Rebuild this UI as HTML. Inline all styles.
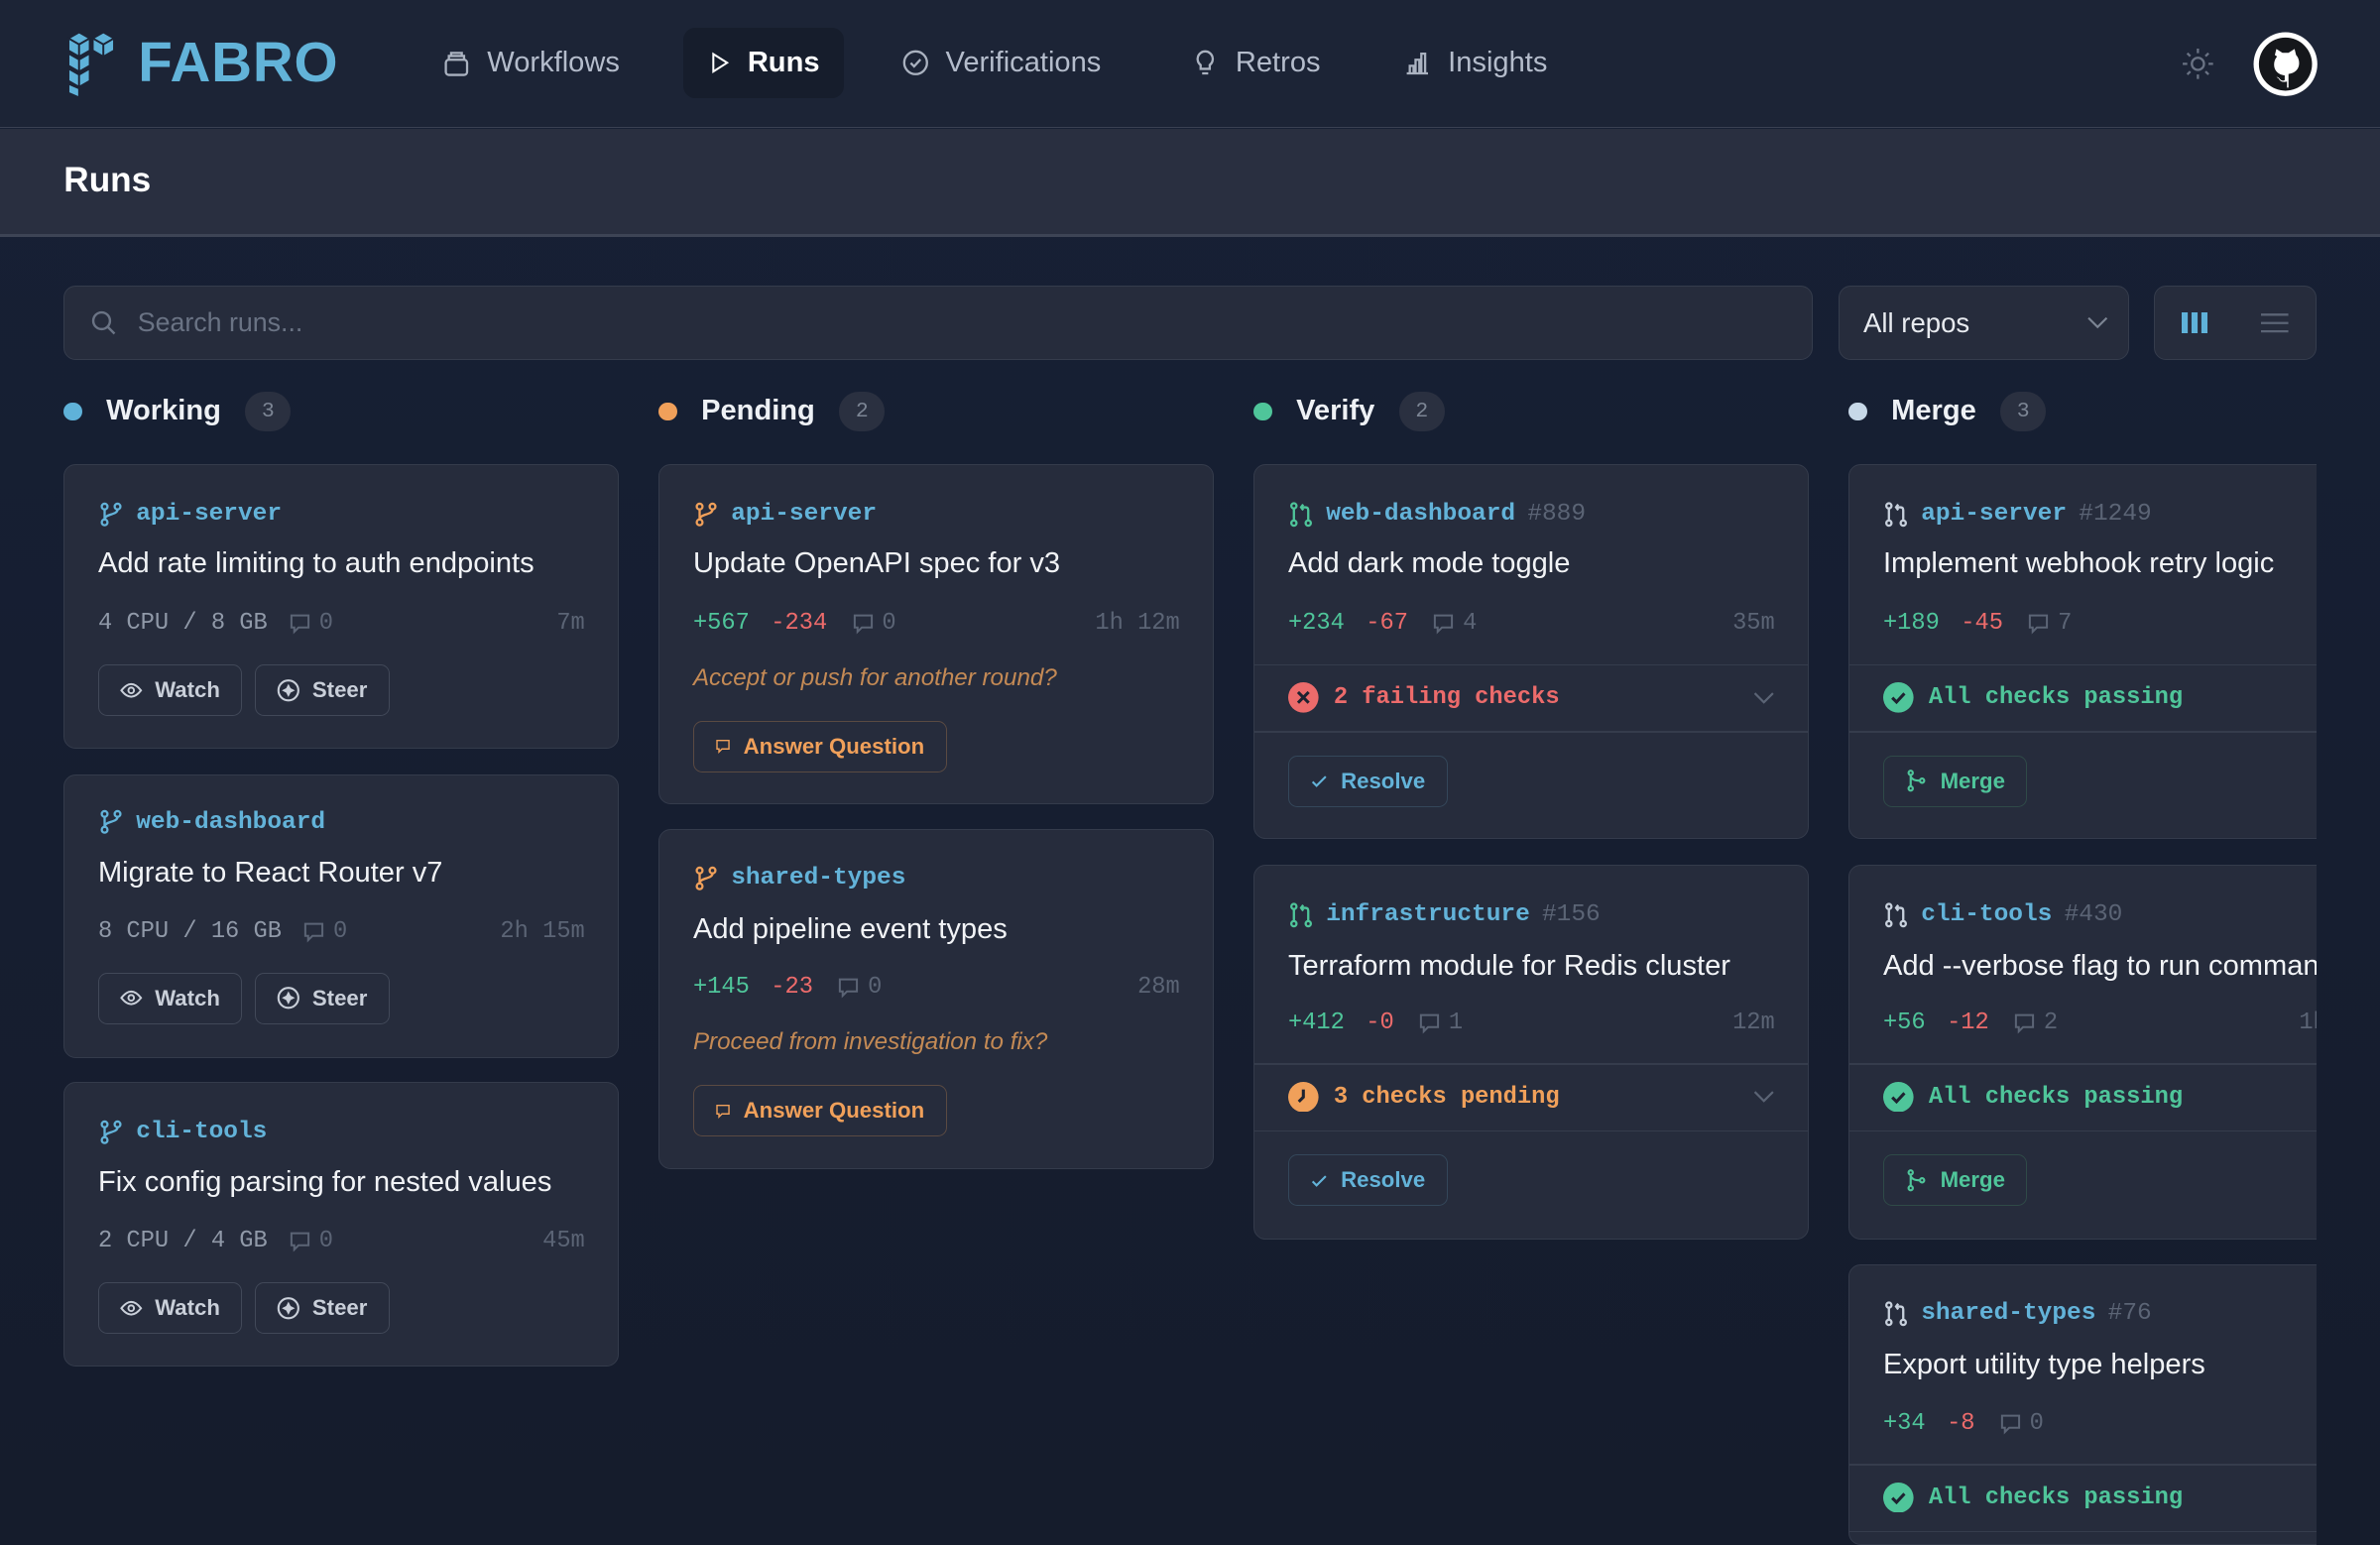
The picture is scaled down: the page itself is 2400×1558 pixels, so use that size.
<!DOCTYPE html>
<html><head><meta charset="utf-8"><style>
*{box-sizing:border-box;margin:0;padding:0}
html,body{width:2400px;height:1558px;overflow:hidden;background:#161e30}
#r{zoom:1.5306;width:1568px;height:1018px;overflow:hidden;position:relative;font-family:"Liberation Sans",sans-serif;color:#e6e9ef;background:linear-gradient(180deg,#172035,#151c2c)}
.hdr{position:absolute;left:0;top:0;width:1568px;height:84px;background:#1c2436;border-bottom:1px solid #3a4152}
.band{position:absolute;left:0;top:85px;width:1568px;height:71px;background:#292f40;border-bottom:2px solid #3d4455}
.nav{position:absolute;top:18px;height:47px;display:flex;align-items:center;gap:10px;font-size:19px;color:#b4bccb;padding:0 16px}
.nav.act{background:#161d2c;border-radius:8px;color:#fff;font-weight:bold}
.abs{position:absolute}
.box{position:absolute;background:#262c3c;border:1px solid #353c4c;border-radius:8px}
.colh{position:absolute;top:259px;height:24px;display:flex;align-items:center;font-size:19px;font-weight:bold;color:#eef1f5}
.dot{width:12px;height:12px;border-radius:50%;margin-right:16px}
.cnt{margin-left:16px;width:30px;height:26px;border-radius:13px;background:#2a3040;color:#7c8594;font-size:14px;font-weight:normal;display:flex;align-items:center;justify-content:center;font-family:"Liberation Mono",monospace}
.clip{position:absolute;left:0;top:0;width:1526px;height:1018px;overflow:hidden}
.card{position:absolute;width:366px;background:#262c3c;border:1px solid #343b4b;border-radius:8px;overflow:hidden}
.repo{position:absolute;left:22px;height:20px;display:flex;align-items:center;gap:8px;font-family:"Liberation Mono",monospace;font-size:16px;font-weight:bold;color:#63b3d9;white-space:nowrap}
.repo .pr{color:#5b6475;font-weight:normal}
.title{position:absolute;left:22px;font-size:19px;color:#f1f3f6;white-space:nowrap;line-height:22px}
.meta{position:absolute;left:22px;right:22px;height:20px;display:flex;align-items:center;font-family:"Liberation Mono",monospace;font-size:15.5px;color:#9099a8;white-space:nowrap}
.meta .t{margin-left:auto;color:#5b6475}
.add{color:#4fc59a;margin-right:14px}.del{color:#ec6b6b;margin-right:16px}
.cm{display:flex;align-items:center;gap:5px;color:#5b6475}
.btn{position:absolute;height:34px;border:1px solid #414858;border-radius:6px;display:flex;align-items:center;gap:8px;padding:0 14px;font-size:14.5px;font-weight:bold;color:#c9cfd9;white-space:nowrap}
.q{position:absolute;left:22px;font-style:italic;font-size:15.8px;color:#c48a55;white-space:nowrap}
.hr{position:absolute;left:0;right:0;height:1px;background:#353c4c}
.chk{position:absolute;left:22px;right:22px;height:22px;display:flex;align-items:center;gap:10px;font-family:"Liberation Mono",monospace;font-size:15.5px;font-weight:bold;white-space:nowrap}
.chk .chev{margin-left:auto}
</style></head><body><div id="r">
<div class="hdr">
 <svg class="abs" style="left:43px;top:20px" width="36" height="44" viewBox="0 0 36 44"><g fill="#5fb2d9" stroke="#1c2436" stroke-width="1.2"><path d="M2 5l7-4 7 4-7 4z"/><path d="M2 5v8l7 4V9z"/><path d="M9 9v8l7-4V5z"/><path d="M18 5l7-4 7 4-7 4z"/><path d="M18 5v8l7 4V9z"/><path d="M25 9v8l7-4V5z"/><path d="M2 15v8l7 4v-8z"/><path d="M9 19v8l7-4v-8z"/><path d="M2 25v8l7 4v-8z"/><path d="M9 29v8l7-4v-8zM2 35v6l7 3v-6z"/></g></svg>
 <div class="abs" style="left:91px;top:20px;font-size:37px;font-weight:bold;color:#62b3d9;letter-spacing:0.5px">FABRO</div>
 <div class="nav" style="left:275px"><svg width="20" height="20" viewBox="0 0 20 20" fill="none" stroke="#aab2c0" stroke-width="1.5"><rect x="3" y="8" width="14" height="10" rx="2"/><path d="M5 8V5.5h10V8M6.5 5.5V3.5h7v2"/></svg>Workflows</div>
 <div class="nav act" style="left:450px;width:106px"><svg width="20" height="20" viewBox="0 0 20 20" fill="none" stroke="#fff" stroke-width="1.6"><path d="M5 3l11 7-11 7z"/></svg>Runs</div>
 <div class="nav" style="left:577px"><svg width="20" height="20" viewBox="0 0 20 20" fill="none" stroke="#aab2c0" stroke-width="1.5"><circle cx="10" cy="10" r="7.5"/><path d="M6.8 10.2l2.2 2.2 4.2-4.6"/></svg>Verifications</div>
 <div class="nav" style="left:768px"><svg width="20" height="20" viewBox="0 0 20 20" fill="none" stroke="#aab2c0" stroke-width="1.5"><path d="M10 2.5a5 5 0 0 0-3 9V14h6v-2.5a5 5 0 0 0-3-9zM8 17h4"/></svg>Retros</div>
 <div class="nav" style="left:908px"><svg width="20" height="20" viewBox="0 0 20 20" fill="none" stroke="#aab2c0" stroke-width="1.5"><path d="M3 17h14M5 17v-5h2.5v5M8.8 17V8h2.5v9M12.6 17V4h2.5v13"/></svg>Insights</div>
 <svg class="abs" style="left:1436px;top:30px" width="24" height="24" viewBox="0 0 24 24" fill="none" stroke="#6a7384" stroke-width="1.5"><circle cx="12" cy="12" r="4"/><path d="M12 2v3M12 19v3M2 12h3M19 12h3M5 5l2 2M17 17l2 2M5 19l2-2M17 7l2-2"/></svg>
 <svg class="abs" style="left:1484px;top:20px" width="44" height="44" viewBox="0 0 44 44"><circle cx="22" cy="22" r="21" fill="#fff"/><circle cx="22" cy="22" r="17.5" fill="#15171b"/><path fill="#fff" d="M15 16l1-4 4 2.5h4l4-2.5 1 4q2 2 2 5.5c0 4-3 6.5-7 7v9h-1v-4q-4 1-5.5-2l-1.5-1q1.5 0 2.5 1.5 1.5 1.5 3 .5v-3c-4-.5-7-3-7-7q0-3.5 2-5.5z"/></svg>
</div>
<div class="band"><div class="abs" style="left:42px;top:21px;font-size:23px;font-weight:bold;color:#fff">Runs</div></div>

<div class="box" style="left:42px;top:188px;width:1152px;height:49px">
 <svg class="abs" style="left:17px;top:15px" width="18" height="18" viewBox="0 0 18 18" fill="none" stroke="#6a7384" stroke-width="1.6"><circle cx="7.5" cy="7.5" r="5.5"/><path d="M11.5 11.5l4.5 4.5"/></svg>
 <div class="abs" style="left:48px;top:14px;font-size:17.5px;color:#6a7384">Search runs...</div>
</div>
<div class="box" style="left:1211px;top:188px;width:192px;height:49px">
 <div class="abs" style="left:16px;top:14px;font-size:18px;color:#e8ebf0">All repos</div>
 <svg class="abs" style="left:162px;top:18px" width="16" height="12" viewBox="0 0 16 12" fill="none" stroke="#7c8594" stroke-width="1.4"><path d="M2 3l6 6 6-6"/></svg>
</div>
<div class="box" style="left:1419px;top:188px;width:107px;height:49px">
 <svg class="abs" style="left:18px;top:17px" width="18" height="14"><rect x="0" y="0" width="4" height="14" fill="#5fb2d9"/><rect x="6.5" y="0" width="4" height="14" fill="#5fb2d9"/><rect x="13" y="0" width="4" height="14" fill="#5fb2d9"/></svg>
 <svg class="abs" style="left:70px;top:17px" width="18" height="14" stroke="#5b6475" stroke-width="1.5"><path d="M0 1.5h18M0 7h18M0 12.5h18"/></svg>
</div>

<div class="colh" style="left:42px"><span class="dot" style="background:#5fb2d9"></span>Working<span class="cnt">3</span></div>
<div class="colh" style="left:434px"><span class="dot" style="background:#f0a05a"></span>Pending<span class="cnt">2</span></div>
<div class="colh" style="left:826px"><span class="dot" style="background:#4fc59a"></span>Verify<span class="cnt">2</span></div>
<div class="colh" style="left:1218px"><span class="dot" style="background:#c7d8e8"></span>Merge<span class="cnt">3</span></div>

<svg width="0" height="0" style="position:absolute"><defs>
<symbol id="br" viewBox="0 0 18 18"><g fill="none" stroke="currentColor" stroke-width="1.6"><circle cx="4.5" cy="3.5" r="2"/><circle cx="4.5" cy="14.5" r="2"/><circle cx="13.5" cy="3.5" r="2"/><path d="M4.5 5.5v7M13.5 5.5c0 4-9 3-9 7"/></g></symbol>
<symbol id="pr" viewBox="0 0 18 18"><g fill="none" stroke="currentColor" stroke-width="1.6"><circle cx="4" cy="3" r="1.8"/><circle cx="4" cy="15" r="1.8"/><circle cx="14" cy="15" r="1.8"/><path d="M4 5v8M14 13V6q0-2-2-2H9M10.5 2L9 4l1.5 2"/></g></symbol>
<symbol id="cm" viewBox="0 0 16 16"><path fill="none" stroke="currentColor" stroke-width="1.4" d="M2 2.5h12v8.5H7l-3 3v-3H2z"/></symbol>
<symbol id="eye" viewBox="0 0 16 16"><g fill="none" stroke="currentColor" stroke-width="1.4"><path d="M1 8q7-9 14 0-7 9-14 0z"/><circle cx="8" cy="8" r="2"/></g></symbol>
<symbol id="steer" viewBox="0 0 16 16"><circle cx="8" cy="8" r="6.8" fill="none" stroke="currentColor" stroke-width="1.4"/><path fill="currentColor" d="M8 3.5l1.5 3 3 1.5-3 1.5L8 12.5 6.5 9.5 3.5 8l3-1.5z"/></symbol>
<symbol id="chev" viewBox="0 0 14 10"><path d="M1 2l6 6 6-6" fill="none" stroke="#5b6475" stroke-width="1.4"/></symbol>
</defs></svg>

<div class="clip">
<!-- Working -->
<div class="card" style="left:42px;top:306px;height:187px">
 <div class="repo" style="top:22px;color:#63b3d9"><svg width="17" height="18" style="color:#63b3d9"><use href="#br"/></svg>api-server</div>
 <div class="title" style="top:54px">Add rate limiting to auth endpoints</div>
 <div class="meta" style="top:94px">4 CPU / 8 GB<span class="cm" style="margin-left:14px"><svg width="15" height="15"><use href="#cm"/></svg>0</span><span class="t">7m</span></div>
 <div class="btn" style="left:22px;top:131px;width:95px"><svg width="16" height="16"><use href="#eye"/></svg>Watch</div>
 <div class="btn" style="left:125px;top:131px;width:89px"><svg width="16" height="16"><use href="#steer"/></svg>Steer</div>
</div>
<div class="card" style="left:42px;top:510px;height:187px">
 <div class="repo" style="top:21px"><svg width="17" height="18"><use href="#br"/></svg>web-dashboard</div>
 <div class="title" style="top:54px">Migrate to React Router v7</div>
 <div class="meta" style="top:93px">8 CPU / 16 GB<span class="cm" style="margin-left:14px"><svg width="15" height="15"><use href="#cm"/></svg>0</span><span class="t">2h 15m</span></div>
 <div class="btn" style="left:22px;top:130px;width:95px"><svg width="16" height="16"><use href="#eye"/></svg>Watch</div>
 <div class="btn" style="left:125px;top:130px;width:89px"><svg width="16" height="16"><use href="#steer"/></svg>Steer</div>
</div>
<div class="card" style="left:42px;top:713px;height:187px">
 <div class="repo" style="top:22px"><svg width="17" height="18"><use href="#br"/></svg>cli-tools</div>
 <div class="title" style="top:55px">Fix config parsing for nested values</div>
 <div class="meta" style="top:94px">2 CPU / 4 GB<span class="cm" style="margin-left:14px"><svg width="15" height="15"><use href="#cm"/></svg>0</span><span class="t">45m</span></div>
 <div class="btn" style="left:22px;top:131px;width:95px"><svg width="16" height="16"><use href="#eye"/></svg>Watch</div>
 <div class="btn" style="left:125px;top:131px;width:89px"><svg width="16" height="16"><use href="#steer"/></svg>Steer</div>
</div>

<!-- Pending -->
<div class="card" style="left:434px;top:306px;height:224px">
 <div class="repo" style="top:22px"><svg width="17" height="18" style="color:#f0a05a"><use href="#br"/></svg>api-server</div>
 <div class="title" style="top:54px">Update OpenAPI spec for v3</div>
 <div class="meta" style="top:94px"><span class="add">+567</span><span class="del">-234</span><span class="cm"><svg width="15" height="15"><use href="#cm"/></svg>0</span><span class="t">1h 12m</span></div>
 <div class="q" style="top:131px">Accept or push for another round?</div>
 <div class="btn" style="left:22px;top:168px;width:167px;border-color:#5a4a42;color:#f0a05a"><svg width="16" height="16"><use href="#cm"/></svg>Answer Question</div>
</div>
<div class="card" style="left:434px;top:546px;height:224px">
 <div class="repo" style="top:22px"><svg width="17" height="18" style="color:#f0a05a"><use href="#br"/></svg>shared-types</div>
 <div class="title" style="top:55px">Add pipeline event types</div>
 <div class="meta" style="top:94px"><span class="add">+145</span><span class="del">-23</span><span class="cm"><svg width="15" height="15"><use href="#cm"/></svg>0</span><span class="t">28m</span></div>
 <div class="q" style="top:131px">Proceed from investigation to fix?</div>
 <div class="btn" style="left:22px;top:168px;width:167px;border-color:#5a4a42;color:#f0a05a"><svg width="16" height="16"><use href="#cm"/></svg>Answer Question</div>
</div>

<!-- Verify -->
<div class="card" style="left:826px;top:306px;height:247px">
 <div class="repo" style="top:22px"><svg width="17" height="18" style="color:#4fc59a"><use href="#pr"/></svg>web-dashboard<span class="pr">#889</span></div>
 <div class="title" style="top:54px">Add dark mode toggle</div>
 <div class="meta" style="top:94px"><span class="add">+234</span><span class="del">-67</span><span class="cm"><svg width="15" height="15"><use href="#cm"/></svg>4</span><span class="t">35m</span></div>
 <div class="hr" style="top:131px"></div>
 <div class="chk" style="top:142px;color:#ec6b6b"><svg width="20" height="20" viewBox="0 0 20 20"><circle cx="10" cy="10" r="10" fill="#ec6b6b"/><path d="M6.5 6.5l7 7M13.5 6.5l-7 7" stroke="#1e2230" stroke-width="2"/></svg>2 failing checks<svg class="chev" width="14" height="10"><use href="#chev"/></svg></div>
 <div class="hr" style="top:175px"></div>
 <div class="btn" style="left:22px;top:191px;width:105px;border-color:#34475a;color:#63b3d9"><svg width="14" height="14" viewBox="0 0 14 14" fill="none" stroke="#63b3d9" stroke-width="1.6"><path d="M2 7.5l3 3 7-7"/></svg>Resolve</div>
</div>
<div class="card" style="left:826px;top:570px;height:247px">
 <div class="repo" style="top:22px"><svg width="17" height="18" style="color:#4fc59a"><use href="#pr"/></svg>infrastructure<span class="pr">#156</span></div>
 <div class="title" style="top:55px">Terraform module for Redis cluster</div>
 <div class="meta" style="top:93px"><span class="add">+412</span><span class="del">-0</span><span class="cm"><svg width="15" height="15"><use href="#cm"/></svg>1</span><span class="t">12m</span></div>
 <div class="hr" style="top:130px"></div>
 <div class="chk" style="top:141px;color:#f0a05a"><svg width="20" height="20" viewBox="0 0 20 20"><circle cx="10" cy="10" r="10" fill="#f0a05a"/><path d="M10 5v5l-3 3" stroke="#1e2230" stroke-width="2" fill="none"/></svg>3 checks pending<svg class="chev" width="14" height="10"><use href="#chev"/></svg></div>
 <div class="hr" style="top:174px"></div>
 <div class="btn" style="left:22px;top:190px;width:105px;border-color:#34475a;color:#63b3d9"><svg width="14" height="14" viewBox="0 0 14 14" fill="none" stroke="#63b3d9" stroke-width="1.6"><path d="M2 7.5l3 3 7-7"/></svg>Resolve</div>
</div>

<!-- Merge -->
<div class="card" style="left:1218px;top:306px;height:247px">
 <div class="repo" style="top:22px"><svg width="17" height="18" style="color:#c7d0dc"><use href="#pr"/></svg>api-server<span class="pr">#1249</span></div>
 <div class="title" style="top:54px">Implement webhook retry logic</div>
 <div class="meta" style="top:94px"><span class="add">+189</span><span class="del">-45</span><span class="cm"><svg width="15" height="15"><use href="#cm"/></svg>7</span></div>
 <div class="hr" style="top:131px"></div>
 <div class="chk" style="top:142px;color:#4fc59a"><svg width="20" height="20" viewBox="0 0 20 20"><circle cx="10" cy="10" r="10" fill="#4fc59a"/><path d="M6 10.2l2.8 2.8 5.2-5.6" stroke="#1e2230" stroke-width="2" fill="none"/></svg>All checks passing</div>
 <div class="hr" style="top:175px"></div>
 <div class="btn" style="left:22px;top:191px;width:95px;border-color:#2f4a48;color:#4fc59a"><svg width="16" height="16" viewBox="0 0 16 16" fill="none" stroke="#4fc59a" stroke-width="1.5"><circle cx="4" cy="2.5" r="1.5"/><circle cx="4" cy="13.5" r="1.5"/><circle cx="12" cy="8" r="1.5"/><path d="M4 4v8M4 5q1 3 6.5 3"/></svg>Merge</div>
</div>
<div class="card" style="left:1218px;top:570px;height:247px">
 <div class="repo" style="top:22px"><svg width="17" height="18" style="color:#c7d0dc"><use href="#pr"/></svg>cli-tools<span class="pr">#430</span></div>
 <div class="title" style="top:55px">Add --verbose flag to run command</div>
 <div class="meta" style="top:93px;right:-200px"><span class="add">+56</span><span class="del">-12</span><span class="cm"><svg width="15" height="15"><use href="#cm"/></svg>2</span><span class="t" style="position:absolute;left:274px">1h</span></div>
 <div class="hr" style="top:130px"></div>
 <div class="chk" style="top:141px;color:#4fc59a"><svg width="20" height="20" viewBox="0 0 20 20"><circle cx="10" cy="10" r="10" fill="#4fc59a"/><path d="M6 10.2l2.8 2.8 5.2-5.6" stroke="#1e2230" stroke-width="2" fill="none"/></svg>All checks passing</div>
 <div class="hr" style="top:174px"></div>
 <div class="btn" style="left:22px;top:190px;width:95px;border-color:#2f4a48;color:#4fc59a"><svg width="16" height="16" viewBox="0 0 16 16" fill="none" stroke="#4fc59a" stroke-width="1.5"><circle cx="4" cy="2.5" r="1.5"/><circle cx="4" cy="13.5" r="1.5"/><circle cx="12" cy="8" r="1.5"/><path d="M4 4v8M4 5q1 3 6.5 3"/></svg>Merge</div>
</div>
<div class="card" style="left:1218px;top:833px;height:185px">
 <div class="repo" style="top:22px"><svg width="17" height="18" style="color:#c7d0dc"><use href="#pr"/></svg>shared-types<span class="pr">#76</span></div>
 <div class="title" style="top:55px">Export utility type helpers</div>
 <div class="meta" style="top:94px"><span class="add">+34</span><span class="del">-8</span><span class="cm"><svg width="15" height="15"><use href="#cm"/></svg>0</span></div>
 <div class="hr" style="top:131px"></div>
 <div class="chk" style="top:142px;color:#4fc59a"><svg width="20" height="20" viewBox="0 0 20 20"><circle cx="10" cy="10" r="10" fill="#4fc59a"/><path d="M6 10.2l2.8 2.8 5.2-5.6" stroke="#1e2230" stroke-width="2" fill="none"/></svg>All checks passing</div>
 <div class="hr" style="top:175px"></div>
</div>
</div>
</div></body></html>
